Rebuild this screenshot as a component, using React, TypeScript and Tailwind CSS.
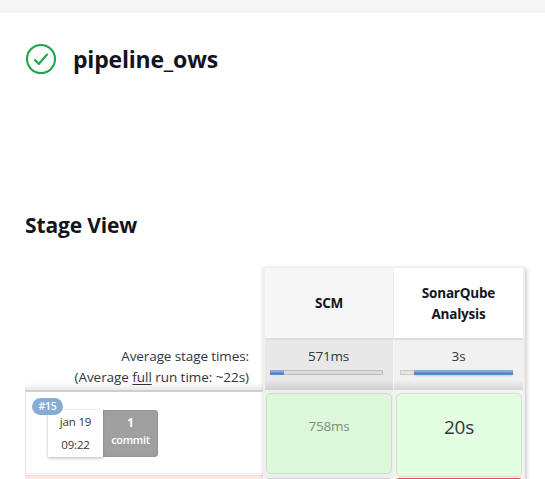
import React from "react";

type StageProps = {
  name: React.ReactNode;
  average: string;
  track: string;
  tone: { column: string; head: string; avg: string };
  bar: React.ReactNode;
  children: React.ReactNode;
};

function Stage({ name, average, tone, bar, track, children }: StageProps) {
  return (
    <div className={`flex h-full shrink-0 flex-col ${tone.column}`}>
      <div className={`flex h-[70px] shrink-0 items-center justify-center pt-px text-center text-[13.5px] font-bold leading-[21px] tracking-[-0.2px] ${tone.head}`}>
        <div>{name}</div>
      </div>
      <div className={`h-[52px] shrink-0 border-t-2 border-t-[#dddddd] ${tone.avg}`}>
        <div className="mt-[6px] h-[21px] text-center text-[13.5px] leading-[21px] tracking-[-0.2px] text-[#333340]">{average}</div>
        <div className={`mt-[3px] flex h-[5px] w-[113px] ${track}`}>{bar}</div>
      </div>
      {children}
    </div>
  );
}

export default function App() {
  return (
    <main className="h-[479px] w-[545px] overflow-hidden bg-white font-['Open_Sans','Noto_Sans',sans-serif] text-[#14141f]">
      <div className="h-[13px] bg-[#f5f5f8]" />
      <header className="flex h-[92px] items-center pl-[25px]">
        <svg width="32" height="32" viewBox="0 0 32 32" fill="none" stroke="#1ea64b" strokeWidth="2.1" strokeLinecap="round" strokeLinejoin="round">
          <circle cx="16" cy="16" r="14" />
          <path d="M10 17l3.8 4L22 11.5" />
        </svg>
        <h1 className="ml-[16px] text-[23px] font-bold leading-8 tracking-[-0.2px]">pipeline_ows</h1>
      </header>
      <h2 className="mt-[104px] pl-[25px] text-[21px] font-bold leading-8 tracking-[-0.15px]">Stage View</h2>
      <section className="mt-[26px] flex h-[212px] pl-[25px]">
        <div className="flex w-[238px] flex-col">
          <div className="flex h-[123px] flex-col justify-end bg-[linear-gradient(to_bottom,white_94%,#e9e9e9)] pb-[2px] pr-[14px] text-right text-[13.5px] leading-[21px] tracking-[-0.05px] text-[#333340]">
            <div className="tracking-[-0.1px]">Average stage times:</div>
            <div>(Average <span className="underline underline-offset-2">full</span> run time: ~22s)</div>
          </div>
          <div className="relative flex h-[84px] shrink-0 border-b border-l border-t-2 border-b-[#eeeeee] border-l-[#e2e2e2] border-t-[#cfcfcf] pl-[22px] pt-[18px] text-[11.5px]">
            <div className="h-[47px] w-[55px] bg-white text-center leading-[23px] tracking-[-0.2px] text-[#333340] shadow-[0_1px_3px_rgba(0,0,0,0.3)]">
              <div>jan 19</div>
              <div>09:22</div>
            </div>
            <div className="h-[47px] w-[55px] rounded-r-[4px] bg-[#9f9f9f] pt-[4px] text-center leading-[17px] text-white shadow-[inset_0_0_2px_#777]">
              <div className="font-bold">1</div>
              <div className="text-[11px] font-semibold tracking-[-0.35px]">commit</div>
            </div>
            <span className="absolute left-[6px] top-[6px] flex h-[17px] w-[31px] items-center justify-center rounded-full bg-[#86abd4] pt-px text-[10.5px] font-semibold tracking-[-0.3px] text-white">#15</span>
          </div>
          <div className="mt-px flex-1 border-t border-[#e9dedb] bg-[#ffe8e2]" />
        </div>
        <div className="flex w-[262px] border-x-2 border-t border-[#efefef] bg-white shadow-[2px_2px_4px_rgba(0,0,0,0.18),-1px_0_3px_rgba(0,0,0,0.08)]">
          <Stage
            name="SCM"
            average="571ms"
            tone={{ column: "w-[128px]", head: "bg-[#f6f6f6]", avg: "bg-[linear-gradient(to_bottom,#e8e8e8_80%,#d0d0d0)] pl-[5px] pr-[6px]" }}
            track="border border-[#bebebe] bg-[#dcdcdc]"
            bar={<div className="-my-px -ml-px h-[5px] w-[14px] bg-[linear-gradient(#86abd9_40%,#477bd0_60%,#5e8fd5)]" />}
          >
            <div className="flex-1 bg-[#ecefeb] px-px pt-[3px]">
              <div className="flex h-[81px] items-center justify-center rounded-[5px] border border-[#cddbcb] bg-[#ddf7db] pb-[14px] text-[13.5px] tracking-[-0.2px] text-[#7b8d7b]">758ms</div>
              <div className="mx-px mt-[4px] h-[3px] rounded-t-[5px] border-t border-[#d5d5d5] bg-[#e5e5e5]" />
            </div>
          </Stage>
          <Stage
            name={<>SonarQube<br />Analysis</>}
            average="3s"
            tone={{ column: "w-[130px]", head: "border-l border-l-[#eeeeee] bg-white", avg: "border-l border-l-[#f7f7f7] bg-[linear-gradient(to_bottom,#f1f1f1_80%,#d5d5d5)] pl-[6px] pr-[6px]" }}
            track="border border-[#c9c9c9] bg-[#e5e5e5]"
            bar={<div className="-my-px -mr-px ml-auto h-[5px] w-[99px] bg-[linear-gradient(#86abd9_40%,#477bd0_60%,#5e8fd5)] shadow-[0_1px_2px_rgba(0,0,0,0.15)]" />}
          >
            <div className="flex-1 bg-[#f2f4f1] pl-[3px] pr-px pt-[3px]">
              <div className="flex h-[84px] items-center justify-center rounded-[5px] border border-[#d3ddd1] bg-[#e3ffe2] pb-[16px] text-[19px] tracking-[-0.2px] text-[#333340]">20s</div>
              <div className="mt-px h-[3px] rounded-t-[5px] border-t-2 border-[#e55550] bg-[#ffe3df]" />
            </div>
          </Stage>
        </div>
      </section>
    </main>
  );
}
